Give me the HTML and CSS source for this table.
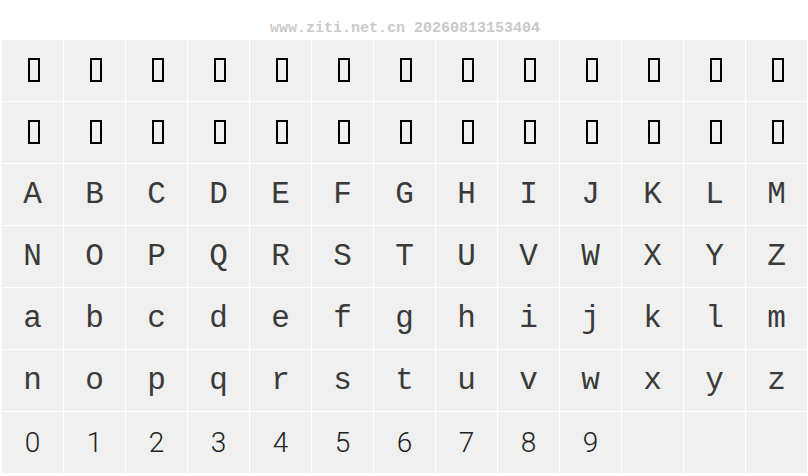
FILE: index.html
```html
<!DOCTYPE html>
<html lang="zh-CN">
<head>
    <meta charset="UTF-8">
    <title>字体预览</title>
    <link rel="stylesheet" href="styles.css">
</head>
<body>
    <!-- 水印 -->
    <div class="mark">www.ziti.net.cn 20260813153404</div>

    <!-- 字符表 -->
    <div class="chart">
        <div class="cell"><span class="tofu"></span></div>
        <div class="cell"><span class="tofu"></span></div>
        <div class="cell"><span class="tofu"></span></div>
        <div class="cell"><span class="tofu"></span></div>
        <div class="cell"><span class="tofu"></span></div>
        <div class="cell"><span class="tofu"></span></div>
        <div class="cell"><span class="tofu"></span></div>
        <div class="cell"><span class="tofu"></span></div>
        <div class="cell"><span class="tofu"></span></div>
        <div class="cell"><span class="tofu"></span></div>
        <div class="cell"><span class="tofu"></span></div>
        <div class="cell"><span class="tofu"></span></div>
        <div class="cell"><span class="tofu"></span></div>

        <div class="cell"><span class="tofu"></span></div>
        <div class="cell"><span class="tofu"></span></div>
        <div class="cell"><span class="tofu"></span></div>
        <div class="cell"><span class="tofu"></span></div>
        <div class="cell"><span class="tofu"></span></div>
        <div class="cell"><span class="tofu"></span></div>
        <div class="cell"><span class="tofu"></span></div>
        <div class="cell"><span class="tofu"></span></div>
        <div class="cell"><span class="tofu"></span></div>
        <div class="cell"><span class="tofu"></span></div>
        <div class="cell"><span class="tofu"></span></div>
        <div class="cell"><span class="tofu"></span></div>
        <div class="cell"><span class="tofu"></span></div>

        <div class="cell">A</div>
        <div class="cell">B</div>
        <div class="cell">C</div>
        <div class="cell">D</div>
        <div class="cell">E</div>
        <div class="cell">F</div>
        <div class="cell">G</div>
        <div class="cell">H</div>
        <div class="cell">I</div>
        <div class="cell">J</div>
        <div class="cell">K</div>
        <div class="cell">L</div>
        <div class="cell">M</div>

        <div class="cell">N</div>
        <div class="cell">O</div>
        <div class="cell">P</div>
        <div class="cell">Q</div>
        <div class="cell">R</div>
        <div class="cell">S</div>
        <div class="cell">T</div>
        <div class="cell">U</div>
        <div class="cell">V</div>
        <div class="cell">W</div>
        <div class="cell">X</div>
        <div class="cell">Y</div>
        <div class="cell">Z</div>

        <div class="cell">a</div>
        <div class="cell">b</div>
        <div class="cell">c</div>
        <div class="cell">d</div>
        <div class="cell">e</div>
        <div class="cell">f</div>
        <div class="cell">g</div>
        <div class="cell">h</div>
        <div class="cell">i</div>
        <div class="cell">j</div>
        <div class="cell">k</div>
        <div class="cell">l</div>
        <div class="cell">m</div>

        <div class="cell">n</div>
        <div class="cell">o</div>
        <div class="cell">p</div>
        <div class="cell">q</div>
        <div class="cell">r</div>
        <div class="cell">s</div>
        <div class="cell">t</div>
        <div class="cell">u</div>
        <div class="cell">v</div>
        <div class="cell">w</div>
        <div class="cell">x</div>
        <div class="cell">y</div>
        <div class="cell">z</div>

        <div class="cell num">0</div>
        <div class="cell num">1</div>
        <div class="cell num">2</div>
        <div class="cell num">3</div>
        <div class="cell num">4</div>
        <div class="cell num">5</div>
        <div class="cell num">6</div>
        <div class="cell num">7</div>
        <div class="cell num">8</div>
        <div class="cell num">9</div>
        <div class="cell"></div>
        <div class="cell"></div>
        <div class="cell"></div>
    </div>
</body>
</html>
```

FILE: styles.css
```css
body {
    margin: 0;
    padding: 0;
    background-color: #fff;
    width: 808px;
    height: 476px;
    overflow: hidden;
}
.mark {
    height: 40px;
    line-height: 58px;
    text-align: center;
    font-family: "Liberation Mono", monospace;
    font-weight: bold;
    font-size: 15px;
    color: #cacaca;
    padding-left: 2px;
}
.chart {
    display: grid;
    grid-template-columns: repeat(13, 61px);
    grid-auto-rows: 61px;
    gap: 1px;
    padding-left: 2px;
}
.cell {
    background-color: #f0f0f0;
    display: flex;
    align-items: center;
    justify-content: center;
    font-family: "Liberation Mono", monospace;
    font-size: 31px;
    color: #3a3a3a;
}
.cell.num {
    font-family: Roboto, "Liberation Sans", sans-serif;
    font-weight: 300;
    font-size: 28px;
    color: #222;
}
.tofu {
    display: block;
    width: 8px;
    height: 20px;
    border: 2px solid #000;
    margin-left: 3px;
    margin-top: -1px;
}
```
